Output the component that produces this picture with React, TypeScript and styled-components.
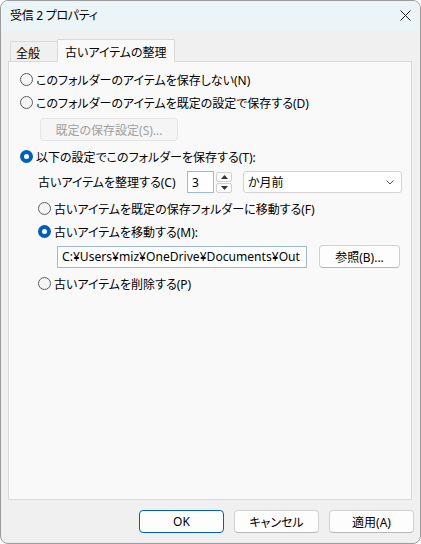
import React from "react";
import styled, { createGlobalStyle, css } from "styled-components";

const Global = createGlobalStyle`
  html, body {
    margin: 0;
    padding: 0;
    background: #ffffff;
  }
  body {
    font-family: "Noto Sans", "Noto Sans CJK JP", sans-serif;
    font-size: 12px;
    color: #000000;
    font-feature-settings: "palt";
  }
  * { box-sizing: border-box; }
`;

const Window = styled.div`
  width: 421px;
  height: 544px;
  border: 1px solid #9b9b9b;
  border-radius: 8px;
  overflow: hidden;
  background: #f0f0f0;
  display: flex;
  flex-direction: column;
`;

const TitleBar = styled.div`
  height: 30px;
  flex: none;
  background: #ebf4f7;
  display: flex;
  align-items: center;
  justify-content: space-between;
  padding: 0 10px 1px 9px;
`;

const Title = styled.span`
  font-size: 12px;
  line-height: 1;
  letter-spacing: -0.3px;
`;

const Close = styled.svg`
  width: 11px;
  height: 11px;
  margin-right: -1px;
`;

const Body = styled.div`
  flex: 1;
  display: flex;
  flex-direction: column;
  padding: 8px 8px 0 7px;
`;

const Tabs = styled.div`
  display: flex;
  align-items: flex-end;
  height: 22px;
  padding-left: 2px;
  position: relative;
  z-index: 1;
`;

const Tab = styled.div<{ $active?: boolean }>`
  height: ${(p) => (p.$active ? 23 : 20)}px;
  display: flex;
  align-items: center;
  border: 1px solid #d9d9d9;
  border-bottom: none;
  background: ${(p) => (p.$active ? "#f9f9f9" : "#f0f0f0")};
  margin-bottom: ${(p) => (p.$active ? -1 : 0)}px;
  ${(p) =>
    p.$active
      ? css`
          padding: 1px 7px 0 7px;
        `
      : css`
          width: 47px;
          padding: 2px 0 0 5px;
          border-right: none;
        `}
`;

const Panel = styled.div`
  height: 439px;
  border: 1px solid #d9d9d9;
  background: #f9f9f9;
  display: flex;
  flex-direction: column;
  padding: 6px 0 0 11px;
`;

const Row = styled.div<{ $indent?: number; $top?: number; $h?: number }>`
  display: flex;
  align-items: center;
  height: ${(p) => p.$h ?? 23}px;
  margin-left: ${(p) => p.$indent ?? 0}px;
  margin-top: ${(p) => p.$top ?? 0}px;
`;

const Radio = styled.span<{ $checked?: boolean }>`
  width: 13px;
  height: 13px;
  border-radius: 50%;
  flex: none;
  margin-right: 3px;
  ${(p) =>
    p.$checked
      ? css`
          background: #005fb8;
          display: flex;
          align-items: center;
          justify-content: center;
          &::after {
            content: "";
            width: 5px;
            height: 5px;
            border-radius: 50%;
            background: #ffffff;
          }
        `
      : css`
          border: 1px solid #5c5c5c;
          background: #f5f5f5;
        `}
`;

const Button = styled.div<{ $w: number; $default?: boolean; $disabled?: boolean; $gap?: number }>`
  width: ${(p) => p.$w}px;
  height: 23px;
  flex: none;
  margin-left: ${(p) => p.$gap ?? 0}px;
  display: flex;
  align-items: center;
  justify-content: center;
  border-radius: 4px;
  background: ${(p) => (p.$disabled ? "#f5f5f5" : "#fdfdfd")};
  border: 1px solid ${(p) => (p.$default ? "#005fb8" : p.$disabled ? "#e5e5e5" : "#d0d0d0")};
  ${(p) => !p.$default && !p.$disabled && css`border-bottom-color: #b8b8b8;`}
  color: ${(p) => (p.$disabled ? "#a0a0a0" : "#000000")};
`;

const Label = styled.span<{ $w?: number }>`
  width: ${(p) => (p.$w ? `${p.$w}px` : "auto")};
  flex: none;
`;

const Field = styled.div<{ $w: number }>`
  width: ${(p) => p.$w}px;
  height: 22px;
  flex: none;
  background: #ffffff;
  border: 1px solid #9cb8dc;
  display: flex;
  align-items: center;
  padding-left: 4px;
  overflow: hidden;
  white-space: nowrap;
`;

const PathText = styled.span`
  font-size: 12.1px;
`;

const Spin = styled.div`
  display: flex;
  flex-direction: column;
  gap: 1px;
  margin-left: 2px;
  flex: none;
`;

const SpinButton = styled.div`
  width: 16px;
  height: 10px;
  border: 1px solid #d0d0d0;
  border-radius: 2px;
  background: #fbfbfb;
  display: flex;
  align-items: center;
  justify-content: center;
`;

const Combo = styled.div`
  width: 159px;
  height: 22px;
  margin-left: 11px;
  flex: none;
  background: #ffffff;
  border: 1px solid #d3d3d3;
  border-radius: 3px;
  display: flex;
  align-items: center;
  justify-content: space-between;
  padding: 0 7px 0 4px;
`;

const Footer = styled.div`
  display: flex;
  justify-content: flex-end;
  gap: 10px;
  padding: 10px 0 0 0;
  margin-right: -2px;
`;

const Arrow = ({ up }: { up?: boolean }) => (
  <svg width="7" height="4" viewBox="0 0 7 4">
    <path d={up ? "M0 4 L3.5 0 L7 4 Z" : "M0 0 L3.5 4 L7 0 Z"} fill="#333" />
  </svg>
);

export default function App() {
  return (
    <>
      <Global />
      <Window>
        <TitleBar>
          <Title>受信 2 プロパティ</Title>
          <Close viewBox="0 0 11 11">
            <path d="M0.5 0.5 L10.5 10.5 M10.5 0.5 L0.5 10.5" stroke="#1a1a1a" strokeWidth="1" />
          </Close>
        </TitleBar>
        <Body>
          <Tabs>
            <Tab>全般</Tab>
            <Tab $active>古いアイテムの整理</Tab>
          </Tabs>
          <Panel>
            <Row>
              <Radio />
              このフォルダーのアイテムを保存しない(N)
            </Row>
            <Row>
              <Radio />
              このフォルダーのアイテムを既定の設定で保存する(D)
            </Row>
            <Row $indent={20} $top={4}>
              <Button $w={138} $disabled>既定の保存設定(S)...</Button>
            </Row>
            <Row $top={4}>
              <Radio $checked />
              以下の設定でこのフォルダーを保存する(T):
            </Row>
            <Row $indent={18} $top={3} $h={22}>
              <Label $w={149}>古いアイテムを整理する(C)</Label>
              <Field $w={27}>3</Field>
              <Spin>
                <SpinButton>
                  <Arrow up />
                </SpinButton>
                <SpinButton>
                  <Arrow />
                </SpinButton>
              </Spin>
              <Combo>
                <span>か月前</span>
                <svg width="8" height="5" viewBox="0 0 8 5">
                  <path d="M0.5 0.5 L4 4 L7.5 0.5" stroke="#555" fill="none" strokeWidth="1" />
                </svg>
              </Combo>
            </Row>
            <Row $indent={18} $top={4}>
              <Radio />
              古いアイテムを既定の保存フォルダーに移動する(F)
            </Row>
            <Row $indent={18}>
              <Radio $checked />
              古いアイテムを移動する(M):
            </Row>
            <Row $indent={37} $top={2} $h={23}>
              <Field $w={250}>
                <PathText>C:¥Users¥miz¥OneDrive¥Documents¥Out</PathText>
              </Field>
              <Button $w={81} $gap={12}>参照(B)...</Button>
            </Row>
            <Row $indent={18} $top={4}>
              <Radio />
              古いアイテムを削除する(P)
            </Row>
          </Panel>
          <Footer>
            <Button $w={85} $default>OK</Button>
            <Button $w={85}>キャンセル</Button>
            <Button $w={85}>適用(A)</Button>
          </Footer>
        </Body>
      </Window>
    </>
  );
}
